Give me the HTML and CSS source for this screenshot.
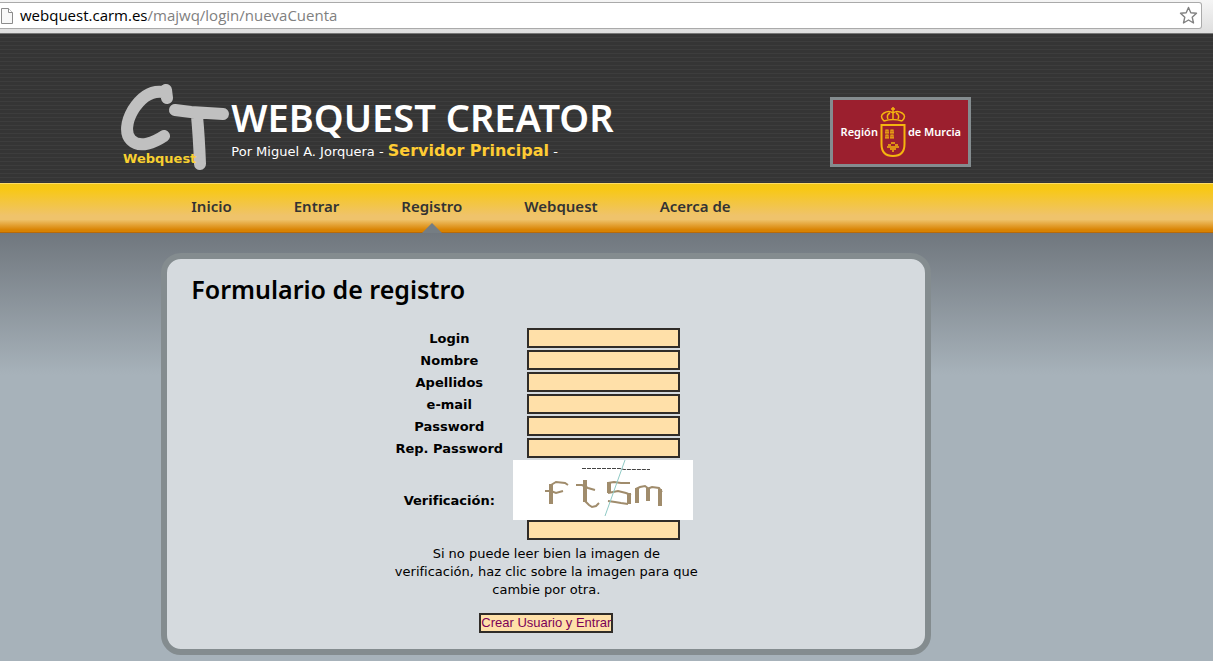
FILE: index.html
```html
<!DOCTYPE html>
<html lang="es">
<head>
<meta charset="utf-8">
<title>Webquest Creator</title>
<link rel="stylesheet" href="styles.css">
</head>
<body>
<div class="toolbar">
  <div class="address">
    <svg class="page-icon" width="12" height="16" viewBox="0 0 12 16"><path d="M.5.5h7l4 4v11H.5z" fill="#f8f8f8" stroke="#8b8b8b"/><path d="M7.500 .5v4h4" fill="#fff" stroke="#8b8b8b"/></svg>
    <span class="url"><span class="host">webquest.carm.es</span>/majwq/login/nuevaCuenta</span>
    <button class="star" type="button" aria-label="Marcador"><svg width="19" height="19" viewBox="0 0 19 19"><path d="M9.500 1.500l2.300 5.300 5.700.5-4.300 3.900 1.300 5.800-5-3-5 3 1.300-5.800L1.500 7.300l5.700-.5z" fill="#fff" stroke="#808080" stroke-width="1.400" stroke-linejoin="round"/></svg></button>
  </div>
</div>
<header class="header">
  <div class="wrap head-row">
    <svg class="logo" width="110" height="90" viewBox="0 0 110 90" role="img" aria-label="CT Webquest">
      <g fill="none" stroke="#c0c0c0" stroke-linecap="round" stroke-linejoin="round" stroke-width="12">
        <path d="M46 16L45 8L42 10C28 8 19 17 12 28C5 40 4 52 10 58C19 67 34 60 43 54"/>
        <path d="M54 28L70 30L102 32M76 34Q78 55 79 82"/>
      </g>
      <text x="2" y="81" class="logo-text">Webquest</text>
    </svg>
    <div class="titles">
      <h1>WEBQUEST CREATOR</h1>
      <p class="byline">Por Miguel A. Jorquera - <strong>Servidor Principal</strong> -</p>
    </div>
    <a class="region" href="#">
      <span>Región</span>
      <svg width="26" height="52" viewBox="0 0 26 52" fill="none" stroke="#f5b50f">
        <path d="M1.500 19h23v19q0 12-11.500 12T1.500 38z" stroke-width="2"/>
        <path d="M4 15Q-1 10 4 7Q9 4 13 7Q17 4 22 7Q27 10 22 15M4 15q9-3 18 0M8 13Q6 9 10 7M18 13Q20 9 16 7M13 1v12M11 3h4" stroke-width="1.500"/>
        <path d="M6 27v-3h2v3M11 27v-3h2v3M6 32v-3h2v3M11 32v-3h2v3M5 27h4M10 27h4M5 32h4M10 32h4" stroke-width="1.200"/>
        <path d="M11 37h4M8 39h3M15 39h3M7 41h12M10 43h6M12 45h2" stroke-width="1.500"/>
      </svg>
      <span>de Murcia</span>
    </a>
  </div>
</header>
<nav class="nav">
  <ul class="wrap menu">
    <li><a href="#">Inicio</a></li>
    <li><a href="#">Entrar</a></li>
    <li class="current"><a href="#">Registro</a></li>
    <li><a href="#">Webquest</a></li>
    <li><a href="#">Acerca de</a></li>
  </ul>
</nav>
<main class="wrap main">
  <section class="panel">
    <h2>Formulario de registro</h2>
    <form class="form">
      <div class="fields">
        <label for="login">Login</label><input id="login" type="text">
        <label for="nombre">Nombre</label><input id="nombre" type="text">
        <label for="apellidos">Apellidos</label><input id="apellidos" type="text">
        <label for="email">e-mail</label><input id="email" type="email">
        <label for="pass">Password</label><input id="pass" type="password">
        <label for="rep">Rep. Password</label><input id="rep" type="password">
        <label for="verif">Verificación:</label>
        <div class="captcha">
          <svg width="180" height="60" viewBox="0 0 180 60" role="img" aria-label="Imagen de verificación">
            <path fill="#fff" d="M0 0h180v60H0z"/>
            <g fill="none" stroke="#a08c6c">
              <path d="M38 44V24" stroke-width="4"/><path d="M38 25l5-3 9 1 3 2M32 31h6l5 2 7-2" stroke-width="2"/>
              <path d="M72 20V42" stroke-width="4"/><path d="M63 25h6l6 3 7 2M72 41l4 4 3 2 4-1 3-3" stroke-width="2"/>
              <path d="M96 22V33M116 33V44M124 43V28M135 28V41M147 29V46" stroke-width="4"/><path d="M95 23l6-1 7 1h9M95 33l10-2 8 2 5 2M95 41l7 1 6 1 7 1M123 29l4-2 5-1 4 3M134 29l5-2 7 1 3 4" stroke-width="2"/>
            </g>
            <path d="M69 8.500h38l4 1h26" fill="none" stroke="#444" stroke-dasharray="4 1"/>
            <path d="M112 0L92 56" stroke="#8fc9c4"/>
          </svg>
          <input id="verif" type="text">
        </div>
      </div>
      <p class="hint">Si no puede leer bien la imagen de verificación, haz clic sobre la imagen para que cambie por otra.</p>
      <button class="submit" type="submit">Crear Usuario y Entrar</button>
    </form>
  </section>
</main>
</body>
</html>
```
FILE: styles.css
```css
* { box-sizing: border-box; }
body {
  margin: 0;
  min-height: 100vh;
  background: #a7b2ba;
  color: #000;
  font: 13px/18px "DejaVu Sans", Verdana, sans-serif;
}
.wrap { width: 70%; min-width: 850px; margin-left: 10%; }

.toolbar {
  height: 34px;
  padding: 2px 11px 5px 0;
  background: linear-gradient(#f5f5f5, #dedede);
  border-bottom: 1px solid #777;
}
.address {
  display: flex;
  align-items: center;
  gap: 7px;
  height: 27px;
  padding: 0 3px 0 1px;
  background: #fff;
  border: 1px solid #aaa;
  border-left: 0;
  border-radius: 0 3px 3px 0;
}
.url { flex: 1; color: #808080; font: 15px/25px "Open Sans", "Noto Sans", sans-serif; }
.host { color: #000; }
.star { display: flex; padding: 0; border: 0; background: none; }

.header {
  background: repeating-linear-gradient(#353535 0 3px, #3d3d3d 3px 4px);
}
.head-row { display: flex; align-items: flex-start; height: 149px; padding-top: 48px; }
.logo { flex: none; }
.logo-text { font: bold 13px "DejaVu Sans", sans-serif; fill: #f8d030; }
.titles { flex: 1; padding-top: 11px; color: #fff; }
h1 { margin: 0; font: 600 38px/48px "Noto Sans", sans-serif; }
.byline { margin: 0; line-height: 20px; }
.byline strong { color: #fc3; font-size: 16px; }
.region {
  display: flex;
  align-items: center;
  justify-content: center;
  gap: 2px;
  width: 141px;
  height: 70px;
  margin-top: 15px;
  border: 3px solid #848c8f;
  background: #9b1f2e;
  color: #fff;
  font: 600 11px/16px "Noto Sans", sans-serif;
  text-decoration: none;
}

.nav {
  border-top: 1px solid #fd6;
  border-bottom: 1px solid #b86a08;
  background: linear-gradient(#fc0d 0, #f8c814 10%, #efc36b 66%, #efc36b 74%, #d98200 96%);
}
.menu { display: flex; gap: 62px; height: 48px; margin-top: 0; margin-bottom: 0; padding: 0 0 0 70px; list-style: none; }
.menu li { position: relative; padding-top: 10px; }
.menu a { color: #333; font: 600 15px/24px "Noto Sans", sans-serif; text-decoration: none; }
.current::after {
  content: "";
  position: absolute;
  bottom: -1px;
  left: 50%;
  margin-left: -10px;
  border: 10px solid transparent;
  border-top: 0;
  border-bottom-color: #757d83;
}

.main {
  padding: 20px 40px 6px;
}
.main::before {
  content: "";
  position: absolute;
  z-index: -1;
  top: 233px;
  left: 0;
  right: 0;
  height: 142px;
  background: linear-gradient(#70777e, #a7b2ba);
}
.panel {
  padding: 11px 24px 16px;
  border: 6px solid #848c8f;
  border-radius: 20px;
  background: #d5dade;
}
h2 { margin: 0 0 20px; font: 600 25px/38px "Noto Sans", sans-serif; }
.form { display: flex; flex-direction: column; align-items: center; }
.fields {
  display: grid;
  grid-template-columns: 112px 180px;
  gap: 2px 8px;
  place-items: center;
  padding-right: 6px;
}
.fields label { padding-top: 2px; font-weight: bold; white-space: nowrap; }
input {
  width: 153px;
  height: 20px;
  padding: 0 2px;
  border: 2px solid #302c28;
  background: #ffe0a9;
}
.captcha { display: flex; flex-direction: column; align-items: center; }
.captcha svg { display: block; }
.hint { width: 308px; margin: 5px 0 14px; text-align: center; }
.submit {
  height: 20px;
  padding: 0;
  border: 2px solid #302c28;
  background: #ffe0a9;
  color: #7b0058;
  font: 13px/16px "Liberation Sans", Arial, sans-serif;
}
```
